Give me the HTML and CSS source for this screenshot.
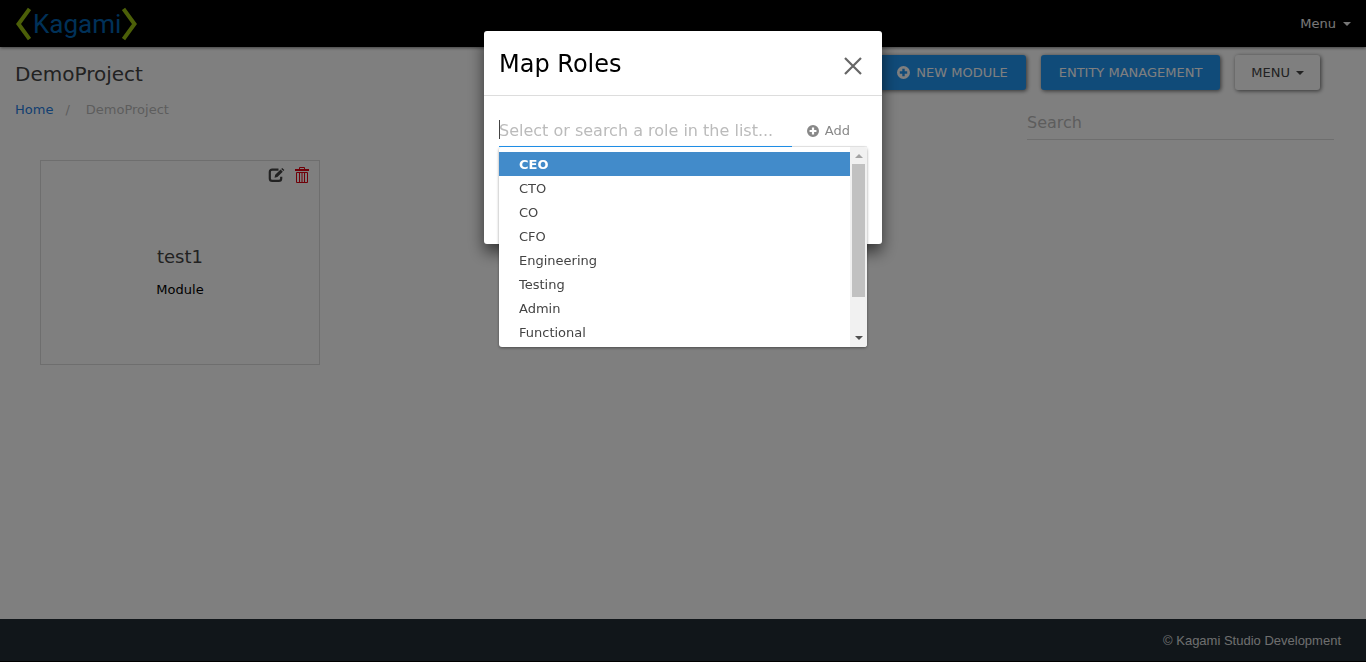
FILE: index.html
```html
<!DOCTYPE html>
<html lang="en">
<head>
<meta charset="utf-8">
<title>DemoProject</title>
<link rel="stylesheet" href="styles.css">
</head>
<body>
<header class="navbar">
  <a class="logo" href="#" aria-label="Kagami">
    <svg class="logo-mark" width="16" height="34" viewBox="0 0 16 34" aria-hidden="true"><path d="M14.500 2 3.500 17l11 15"/></svg>
    <span class="logo-text">Kagami</span>
    <svg class="logo-mark" width="16" height="34" viewBox="0 0 16 34" aria-hidden="true"><path d="M1.500 2 12.500 17l-11 15"/></svg>
  </a>
  <button class="nav-menu" type="button">Menu <span class="caret"></span></button>
</header>
<main class="page">
  <div class="titlebar">
    <h1 class="title">DemoProject</h1>
    <div class="actions">
      <button class="btn primary" type="button">
        <svg width="13" height="13" viewBox="0 0 14 14" aria-hidden="true"><path fill="currentColor" fill-rule="evenodd" d="M7 0a7 7 0 1 0 0 14A7 7 0 0 0 7 0ZM5.700 3h2.600v2.700H11v2.600H8.300V11H5.700V8.300H3V5.700h2.700Z"/></svg>
        NEW MODULE</button>
      <button class="btn primary" type="button">ENTITY MANAGEMENT</button>
      <button class="btn" type="button">MENU <span class="caret"></span></button>
    </div>
  </div>
  <div class="subbar">
    <nav class="crumbs" aria-label="Breadcrumb"><a href="#">Home</a><span class="slash">/</span><span>DemoProject</span></nav>
    <input class="search" type="text" placeholder="Search" aria-label="Search">
  </div>
  <article class="card">
    <div class="card-tools">
      <button class="tool" type="button" aria-label="Edit">
        <svg width="17" height="16" viewBox="0 0 17 16" aria-hidden="true"><path d="M10.500 2.700H4.200Q1.800 2.700 1.800 5.100v6.300q0 2.400 2.400 2.400h6.600q2.400 0 2.400-2.400V9.800" fill="none" stroke="currentColor" stroke-width="2.200"/><path fill="currentColor" d="m6.500 10.800.7-3L12.600 2.500l2.200 2.200-5.400 5.400ZM13.200 1.900l1-1 2.200 2.200-1 1Z"/></svg>
      </button>
      <button class="tool danger" type="button" aria-label="Delete">
        <svg width="14" height="16" viewBox="0 0 14 16" aria-hidden="true"><path fill="none" stroke="currentColor" d="M4.500 2.500v-2h5v2M0 2.500h14M0 3.500h14M1.500 5.500h11v10h-11ZM4.500 5.500v10M7 5.500v10M9.500 5.500v10"/></svg>
      </button>
    </div>
    <div class="card-body">
      <h2 class="card-name">test1</h2>
      <p class="card-type">Module</p>
    </div>
  </article>
</main>
<footer class="footer">© Kagami Studio Development</footer>

<div class="overlay">
  <section class="dialog" role="dialog" aria-modal="true" aria-labelledby="dialog-title">
    <div class="dialog-head">
      <h2 class="dialog-title" id="dialog-title">Map Roles</h2>
      <button class="close" type="button" aria-label="Close">
        <svg width="20" height="20" viewBox="0 0 20 20" aria-hidden="true"><path d="m2 2 16 16M18 2 2 18" fill="none" stroke="currentColor" stroke-width="2.200"/></svg>
      </button>
    </div>
    <div class="dialog-body">
      <div class="combo">
        <div class="combo-row">
          <input class="role-input" type="text" placeholder="Select or search a role in the list..." aria-label="Role">
          <span class="text-cursor"></span>
          <button class="add" type="button">
            <svg width="12" height="12" viewBox="0 0 14 14" aria-hidden="true"><path fill="currentColor" fill-rule="evenodd" d="M7 0a7 7 0 1 0 0 14A7 7 0 0 0 7 0ZM5.700 3h2.600v2.700H11v2.600H8.300V11H5.700V8.300H3V5.700h2.700Z"/></svg>
            Add</button>
        </div>
        <div class="dropdown">
          <ul class="options" role="listbox" aria-label="Roles">
            <li class="option active" role="option" aria-selected="true">CEO</li>
            <li class="option" role="option">CTO</li>
            <li class="option" role="option">CO</li>
            <li class="option" role="option">CFO</li>
            <li class="option" role="option">Engineering</li>
            <li class="option" role="option">Testing</li>
            <li class="option" role="option">Admin</li>
            <li class="option" role="option">Functional</li>
          </ul>
          <div class="scrollbar">
            <span class="arrow up"></span>
            <span class="thumb"></span>
            <span class="arrow down"></span>
          </div>
        </div>
      </div>
    </div>
  </section>
</div>
</body>
</html>
```

FILE: styles.css
```css
* { box-sizing: border-box; }
body {
  margin: 0;
  min-height: 100vh;
  display: flex;
  flex-direction: column;
  background: #fff;
  color: #444;
  font: 13px/24px "DejaVu Sans", Verdana, sans-serif;
}
h1, h2, p, ul { margin: 0; padding: 0; font-weight: 400; }
ul { list-style: none; }
button, input { font: inherit; color: inherit; background: none; border: 0; padding: 0; outline: 0; }
svg { display: block; }

.navbar {
  height: 47px;
  padding: 0 15px;
  display: flex;
  align-items: center;
  justify-content: space-between;
  background: #000;
  box-shadow: 0 1px 3px rgba(0, 0, 0, .5);
}
.logo { display: flex; align-items: center; color: #0062b0; text-decoration: none; }
.logo-mark { fill: none; stroke: #98bf10; stroke-width: 4; }
.logo-text { padding: 0 1px 0 2px; font: 400 26px/34px Roboto, sans-serif; }
.nav-menu { display: flex; align-items: center; gap: 7px; color: #eee; }
.caret { border: 4px solid transparent; border-top-color: currentColor; border-bottom: 0; }

.page { flex: 1; padding: 8px 32px 24px 15px; }
.titlebar { display: flex; justify-content: space-between; padding-right: 14px; }
.title { font-size: 20px; line-height: 38px; }
.actions { display: flex; gap: 15px; }
.btn {
  height: 35px;
  padding: 0 16px;
  display: flex;
  align-items: center;
  gap: 6px;
  border-radius: 3px;
  box-shadow: 1px 1px 4px rgba(0, 0, 0, .6);
}
.primary { padding: 0 18px; background: #2196f3; color: #fff; }

.subbar { display: flex; justify-content: space-between; padding-top: 4px; }
.crumbs { padding-top: 1px; color: #bbb; }
.crumbs a { color: #2780e3; text-decoration: none; }
.slash { padding: 0 16px 0 12px; }
.search { width: 307px; height: 43px; padding-top: 8px; font-size: 16px; border-bottom: 1px solid #ddd; }
.search::placeholder { color: #bbb; opacity: 1; }

.card { width: 280px; height: 205px; margin: 20px 0 0 25px; border: 1px solid #ddd; }
.card-tools { display: flex; justify-content: flex-end; gap: 10px; padding: 6px 10px 0; }
.danger { color: #e00010; }
.card-body { padding-top: 62px; text-align: center; }
.card-name { font-size: 18px; }
.card-type { padding-top: 9px; color: #000; }

.footer {
  height: 43px;
  padding: 0 25px;
  border-bottom: 1px solid #000;
  background: #222d35;
  color: #ddd;
  font: 13px/43px "Liberation Sans", Arial, sans-serif;
  text-align: right;
}

.overlay {
  position: fixed;
  inset: 0;
  display: flex;
  justify-content: center;
  align-items: flex-start;
  padding: 31px 16px;
  background: rgba(0, 0, 0, .5);
}
.dialog {
  width: 100%;
  max-width: 398px;
  background: #fff;
  border-radius: 3px;
  box-shadow: 0 8px 16px rgba(0, 0, 0, .6);
}
.dialog-head {
  display: flex;
  justify-content: space-between;
  align-items: center;
  padding: 17px 19px 14px 15px;
  border-bottom: 1px solid #ddd;
}
.dialog-title { color: #000; font-size: 24px; line-height: 33px; }
.close { color: #666; padding-top: 2px; }
.dialog-body { min-height: 148px; padding: 15px; }
.combo { position: relative; }
.combo-row { display: flex; border-bottom: 1px solid #eee; }
.role-input { flex: 1; min-width: 0; height: 36px; margin-bottom: -1px; padding-top: 3px; border-bottom: 1px solid #2196f3; font-size: 16px; }
.role-input::placeholder { color: #bbb; opacity: 1; }
.text-cursor { position: absolute; top: 9px; left: 0; width: 1px; height: 19px; background: #444; }
.add { display: flex; align-items: center; gap: 6px; padding: 4px 17px 0 15px; color: #888; }
.dropdown {
  position: absolute;
  top: 36px;
  left: 0;
  right: 0;
  height: 200px;
  display: flex;
  overflow: hidden;
  background: #fff;
  border-radius: 3px;
  box-shadow: 0 1px 3px rgba(0, 0, 0, .4);
}
.options { flex: 1; padding-top: 5px; }
.option { padding: 2px 20px 0; line-height: 22px; }
.active { background: #428bca; color: #fff; font-weight: 700; }
.scrollbar { width: 17px; display: flex; flex-direction: column; align-items: center; background: #f1f1f1; }
.arrow { border: 4px solid transparent; }
.up { margin: 7px 0 6px; border-top: 0; border-bottom-color: #a3a3a3; }
.down { margin: auto 0 7px; border-bottom: 0; border-top-color: #505050; }
.thumb { width: 13px; height: 133px; background: #c1c1c1; }
```
